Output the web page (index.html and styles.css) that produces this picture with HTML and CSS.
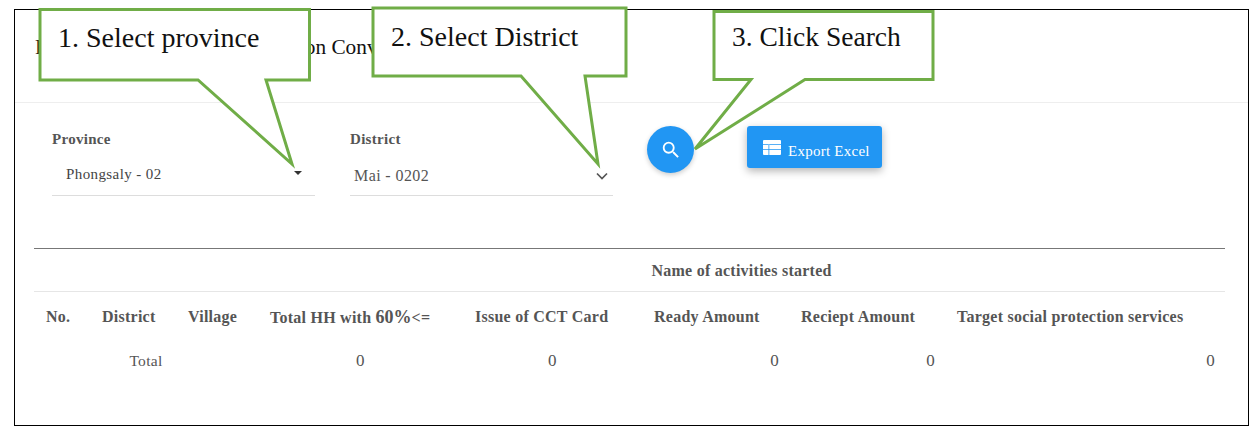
FILE: index.html
```html
<!DOCTYPE html>
<html lang="en">
<head>
    <meta charset="UTF-8">
    <title>Report</title>
    <link rel="stylesheet" href="styles.css">
</head>
<body>
    <div class="frame">
        <div class="title-bar">Report of Target Social Protection Convergence</div>

        <!-- Filters -->
        <div class="filters">
            <div class="field field-province">
                <label>Province</label>
                <div class="select select-province">
                    <span>Phongsaly - 02</span>
                    <i class="caret"></i>
                </div>
            </div>
            <div class="field field-district">
                <label>District</label>
                <div class="select select-district">
                    <span>Mai - 0202</span>
                    <svg class="chevron" width="14" height="14" viewBox="0 0 14 14"><path d="M2 4.500 7 9.500l5-5" fill="none" stroke="#555" stroke-width="1.700"/></svg>
                </div>
            </div>
            <button type="button" class="btn-search">
                <svg width="22" height="22" viewBox="0 0 24 24"><path fill="#fff" d="M15.500 14h-.79l-.28-.27A6.470 6.470 0 0 0 16 9.500 6.500 6.500 0 1 0 9.500 16c1.610 0 3.090-.59 4.230-1.570l.27.28v.79l5 4.990L20.490 19l-4.990-5zm-6 0C7.010 14 5 11.990 5 9.500S7.010 5 9.500 5 14 7.010 14 9.500 11.990 14 9.500 14z"/></svg>
            </button>
            <button type="button" class="btn-export">
                <svg class="table-icon" width="18" height="15" viewBox="0 0 18 15"><path fill="#fff" d="M1 0h16a1 1 0 0 1 1 1v13a1 1 0 0 1-1 1H1a1 1 0 0 1-1-1V1a1 1 0 0 1 1-1zM0 4.200v.8h5.500V4.200zM6.300 4.200v.8h11.700V4.200zM0 9v.8h5.500V9zM6.300 9v.8h11.700V9zM5.500 4.500v10.500h.8V4.500z" fill-rule="evenodd"/></svg>
                <span>Export Excel</span>
            </button>
        </div>

        <table class="report">
            <colgroup>
                <col class="c-no"><col class="c-district"><col class="c-village"><col class="c-hh">
                <col class="c-card"><col class="c-ready"><col class="c-receipt"><col class="c-target">
            </colgroup>
            <thead>
                <tr class="group-row">
                    <th colspan="3"></th>
                    <th colspan="5" class="center">Name of activities started</th>
                </tr>
                <tr class="head-row">
                    <th>No.</th>
                    <th>District</th>
                    <th>Village</th>
                    <th>Total HH with <span class="big">60%</span>&lt;=</th>
                    <th>Issue of CCT Card</th>
                    <th>Ready Amount</th>
                    <th>Reciept Amount</th>
                    <th>Target social protection services</th>
                </tr>
            </thead>
            <tbody>
                <tr>
                    <td colspan="3" class="center">Total</td>
                    <td class="center num">0</td>
                    <td class="center num">0</td>
                    <td class="right num">0</td>
                    <td class="right num">0</td>
                    <td class="right num">0</td>
                </tr>
            </tbody>
        </table>
    </div>

    <!-- Callouts drawn on top of the screenshot -->
    <svg class="callouts" width="1256" height="433" viewBox="0 0 1256 433">
        <polygon points="40,9.500 309.500,9.500 309.500,80 266,80 292,164 198,80 40,80"/>
        <polygon points="373,8 626,8 626,76 585,76 598,164 521,76 373,76"/>
        <polygon points="714,11.500 933,11.500 933,79.500 805,79.500 695,149 751,79.500 714,79.500"/>
        <text x="58" y="47">1. Select province</text>
        <text x="391" y="46">2. Select District</text>
        <text class="callout-three" x="732" y="46">3. Click Search</text>
    </svg>
</body>
</html>
```

FILE: styles.css
```css
* { box-sizing: border-box; }

body {
    margin: 0;
    padding: 9px 7px 0 14px;
    background-color: #fff;
    font-family: "Liberation Serif", serif;
    color: #555;
}

.frame {
    height: 417px;
    border: 1px solid #000;
}

.title-bar {
    height: 93px;
    padding: 25px 0 0 20px;
    border-bottom: 1px solid #eee;
    font-size: 21.300px;
    color: #111;
    white-space: nowrap;
}

.filters {
    display: flex;
    align-items: flex-start;
    height: 145px;
    padding: 23px 0 0 37px;
}

.field { width: 263px; }
.field-province { margin-right: 35px; }
.field-district { margin-right: 34px; }

.field label {
    display: block;
    margin-top: 4px;
    font-size: 15px;
    font-weight: bold;
    line-height: 18px;
    letter-spacing: 0.3px;
}

.select {
    display: flex;
    justify-content: space-between;
    align-items: center;
    height: 45px;
    margin-top: 3px;
    border-bottom: 1px solid #ddd;
    font-size: 15px;
    letter-spacing: 0.4px;
}

.select-province { padding: 2px 13px 0 14px; color: #444; }
.select-district { padding: 6px 4px 0 4px; font-size: 16px; }

.caret {
    width: 0;
    height: 0;
    margin-bottom: 3px;
    border-left: 4.500px solid transparent;
    border-right: 4.500px solid transparent;
    border-top: 4.500px solid #333;
}

.btn-search {
    display: flex;
    align-items: center;
    justify-content: center;
    width: 47px;
    height: 47px;
    margin-right: 53px;
    padding: 0;
    border: 0;
    border-radius: 50%;
    background-color: #2196f3;
    box-shadow: 0 2px 5px rgba(0, 0, 0, 0.2);
}

.btn-export {
    display: flex;
    align-items: center;
    gap: 7px;
    width: 135px;
    height: 42px;
    padding: 0 0 0 16px;
    border: 0;
    border-radius: 3px;
    background-color: #2196f3;
    color: #fff;
    font-family: "Liberation Serif", serif;
    font-size: 15px;
    letter-spacing: 0.25px;
    box-shadow: 0 3px 8px rgba(0, 0, 0, 0.3);
}

.btn-export span { padding-top: 9px; }
.table-icon { margin-top: 0; }

.report {
    width: 1191px;
    margin-left: 19px;
    border-collapse: collapse;
    table-layout: fixed;
    border-top: 1px solid #777;
}

.c-no { width: 56px; }
.c-district { width: 86px; }
.c-village { width: 82px; }
.c-hh { width: 205px; }
.c-card { width: 179px; }
.c-ready { width: 147px; }
.c-receipt { width: 156px; }
.c-target { width: 280px; }

.report th {
    padding: 2px 0 0 12px;
    font-size: 16px;
    text-align: left;
    white-space: nowrap;
    letter-spacing: 0.25px;
}

.report td {
    padding: 0 10px;
    font-size: 15.500px;
    letter-spacing: 0.3px;
}

.report .center { text-align: center; padding-left: 0; padding-right: 0; }
.report .right { text-align: right; }
.report .num { font-size: 17px; }

.group-row { height: 43px; border-bottom: 1px solid #e6e6e6; }
.head-row { height: 49px; }
.report tbody tr { height: 41px; }

.big { font-size: 18px; letter-spacing: 0; }

.callouts {
    position: absolute;
    top: 0;
    left: 0;
}

.callouts polygon {
    fill: #fff;
    stroke: #70ad47;
    stroke-width: 3;
}

.callouts text {
    font-family: "Liberation Serif", serif;
    font-size: 28px;
    fill: #111;
}

.callouts .callout-three { font-size: 27.500px; }
```
